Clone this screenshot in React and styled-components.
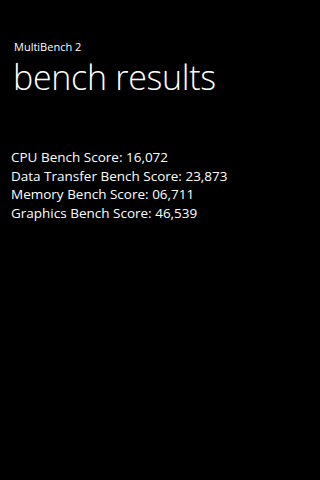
import React from "react";
import styled, { createGlobalStyle } from "styled-components";

const Global = createGlobalStyle`
  html, body { margin: 0; padding: 0; background: #000; }
  body { width: 270px; height: 480px; overflow: hidden; }
`;

const Page = styled.div`
  width: 270px;
  height: 480px;
  background: #000;
  color: #fff;
  font-family: "Open Sans", "Noto Sans", sans-serif;
  display: flex;
  flex-direction: column;
  padding: 41px 0 0 13px;
  box-sizing: border-box;
`;

const AppName = styled.div`
  font-size: 11px;
  line-height: 12px;
  margin-left: 1px;
`;

const PageTitle = styled.h1`
  margin: 1px 0 0 0;
  font-weight: 300;
  font-size: 34px;
  line-height: 46px;
  letter-spacing: -0.3px;
`;

const Results = styled.div`
  display: flex;
  flex-direction: column;
  margin-top: 48px;
  margin-left: -2px;
`;

const ResultLine = styled.div`
  font-size: 13.5px;
  line-height: 18.5px;
`;

const results = [
  ["CPU Bench Score", "16,072"],
  ["Data Transfer Bench Score", "23,873"],
  ["Memory Bench Score", "06,711"],
  ["Graphics Bench Score", "46,539"],
];

export default function App() {
  return (
    <>
      <Global />
      <Page>
        <AppName>MultiBench 2</AppName>
        <PageTitle>bench results</PageTitle>
        <Results>
          {results.map(([label, value]) => (
            <ResultLine key={label}>
              {label}: {value}
            </ResultLine>
          ))}
        </Results>
      </Page>
    </>
  );
}
